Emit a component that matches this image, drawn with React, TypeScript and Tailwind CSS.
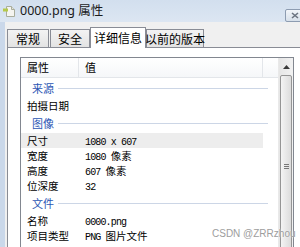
import React from 'react';

type Item =
  | { kind: 'group'; label: string }
  | { kind: 'row'; label: string; value?: React.ReactNode; hl?: boolean };

// latin part of a value, drawn narrow like the system song face
const M = ({ children }: { children: React.ReactNode }) => (
  <span className="font-['Liberation_Mono',monospace] text-[10px] tracking-[-0.85px]">{children}</span>
);

const items: Item[] = [
  { kind: 'group', label: '来源' },
  { kind: 'row', label: '拍摄日期' },
  { kind: 'group', label: '图像' },
  { kind: 'row', label: '尺寸', value: <M>1080 x 607</M>, hl: true },
  { kind: 'row', label: '宽度', value: <><M>1080 </M>像素</> },
  { kind: 'row', label: '高度', value: <><M>607 </M>像素</> },
  { kind: 'row', label: '位深度', value: <M>32</M> },
  { kind: 'group', label: '文件' },
  { kind: 'row', label: '名称', value: <M>0000.png</M> },
  { kind: 'row', label: '项目类型', value: <><M>PNG </M>图片文件</> },
];

const FileIcon = () => (
  <svg width="12" height="11" viewBox="0 0 12 11" className="ml-[3px]">
    <path d="M3.5 0.5h5l3 3v7h-8z" fill="#f4f4f0" stroke="#a9ad9c" />
    <path d="M8.5 0.5v3h3" fill="#e2e4dc" stroke="#a9ad9c" />
    <rect x="0" y="2.5" width="5" height="3" fill="#b5c94a" />
  </svg>
);

const Tab = ({ label, width, active }: { label: string; width: string; active?: boolean }) => (
  <div
    className={
      active
        ? `${width} h-[21px] -mb-px z-10 bg-white border border-b-0 border-[#898c95] flex items-center justify-center whitespace-nowrap text-[12px]`
        : `${width} h-[18px] bg-gradient-to-b from-[#f3f3f3] to-[#e3e3e3] border border-b-0 border-[#898c95] flex items-center justify-center whitespace-nowrap text-[12px]`
    }
  >
    {label}
  </div>
);

export default function App() {
  return (
    <div className="relative w-[300px] h-[247px] overflow-hidden bg-[#cad8ea] text-black font-['Noto_Sans_CJK_SC',sans-serif]">
      {/* title bar */}
      <div className="h-[22px] flex items-center bg-gradient-to-b from-[#d2dfee] to-[#dce6f2]">
        <FileIcon />
        <span className="ml-[5px] text-[12.5px] text-[#1b1b1b] font-['Noto_Sans','Noto_Sans_CJK_SC',sans-serif]">
          0000.png 属性
        </span>
        <div className="ml-auto mt-[8px] w-[20px] h-[13px] -mr-[5px] rounded-[2px] border border-[#8d9cb1] bg-gradient-to-b from-[#f2f5f9] to-[#d7e0ea] flex items-center pl-[5px]">
          <svg width="8" height="7" viewBox="0 0 8 7">
            <path d="M1 1l6 5M7 1l-6 5" stroke="#6b7480" strokeWidth="1.6" />
          </svg>
        </div>
      </div>

      <div className="flex h-[225px]">
        <div className="w-[5px]" />
        <div className="flex-1 flex flex-col bg-[#f0f0f0] pl-[2px] pt-[5px]">
          {/* tabs */}
          <div className="flex items-end h-[20px]">
            <Tab label="常规" width="w-[42px]" />
            <div className="w-[1px]" />
            <Tab label="安全" width="w-[40px]" />
            <Tab label="详细信息" width="w-[56px]" active />
            <Tab label="以前的版本" width="w-[58px]" />
          </div>

          {/* tab panel */}
          <div className="flex-1 bg-white border-l border-t border-[#898c95] pl-[12px] pt-[9px]">
            <div className="w-[274px] h-[200px] border border-[#828790] flex">
              <div className="flex-1 flex flex-col">
                {/* column header */}
                <div className="h-[20px] flex border-b border-[#e3e6ea] bg-gradient-to-b from-white to-[#f5f7f9] text-[11px]">
                  <div className="w-[58px] border-r border-[#e3e6ea] pl-[6px] flex items-center">属性</div>
                  <div className="w-[184px] border-r border-[#e3e6ea] pl-[6px] flex items-center">值</div>
                  <div className="flex-1" />
                </div>

                {items.map((it, i) =>
                  it.kind === 'group' ? (
                    <div key={i} className="h-[20px] flex items-center pl-[11px] pr-[10px]">
                      <span className="text-[11px] text-[#2c56b4]">{it.label}</span>
                      <div className="flex-1 h-px ml-[4px] bg-[#ccd6e6]" />
                    </div>
                  ) : (
                    <div key={i} className="h-[15px] flex text-[10.5px] leading-[15px]">
                      <div className={`w-[242px] flex ${it.hl ? 'bg-[#ededed]' : ''}`}>
                        <div className="w-[58px] pl-[6px] whitespace-nowrap">{it.label}</div>
                        <div className="flex-1 pl-[6px] whitespace-nowrap">{it.value}</div>
                      </div>
                    </div>
                  )
                )}
              </div>

              {/* scrollbar */}
              <div className="w-[15px] flex flex-col bg-gradient-to-r from-[#e6e6e6] to-[#f2f2f2] border-l border-[#e9e9e9]">
                <div className="h-[17px] flex items-center justify-center">
                  <svg width="7" height="4" viewBox="0 0 7 4">
                    <path d="M0 4L3.5 0L7 4z" fill="#3a3a3a" />
                  </svg>
                </div>
                <div className="mx-[1px] flex-1 rounded-[2px] border border-[#959595] bg-gradient-to-r from-[#f4f4f4] to-[#dcdcdc] flex flex-col items-center pt-[88px]">
                  <div className="w-[5px] h-px bg-[#777] mb-[1px]" />
                  <div className="w-[5px] h-px bg-[#777] mb-[1px]" />
                  <div className="w-[5px] h-px bg-[#777]" />
                </div>
              </div>
            </div>
          </div>
        </div>
      </div>

      {/* watermark */}
      <div className="absolute left-[212px] top-[228px] whitespace-nowrap leading-[12px] text-[10px] text-[#9d9d9d] font-['Liberation_Sans',sans-serif] [text-shadow:0_0_2px_white]">
        CSDN @ZRRzhou
      </div>
    </div>
  );
}
